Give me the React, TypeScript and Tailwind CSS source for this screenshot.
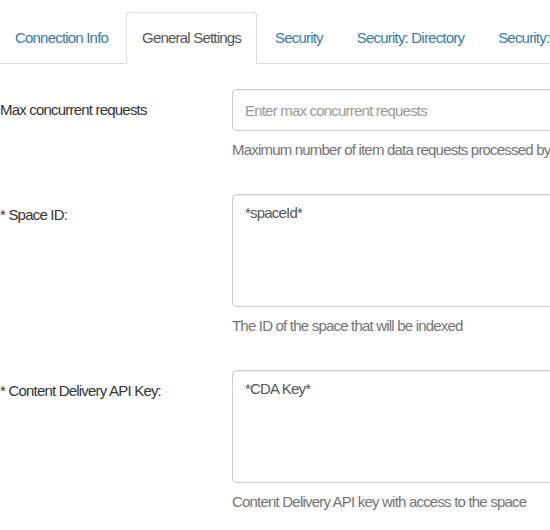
import React from 'react';

const tabs = ['Connection Info', 'General Settings', 'Security', 'Security: Directory', 'Security: Azure AD'];

const fields = [
  {
    label: 'Max concurrent requests',
    required: false,
    multiline: false,
    value: '',
    placeholder: 'Enter max concurrent requests',
    help: 'Maximum number of item data requests processed by the connector at once',
  },
  {
    label: 'Space ID:',
    required: true,
    multiline: true,
    value: '*spaceId*',
    placeholder: '',
    help: 'The ID of the space that will be indexed',
  },
  {
    label: 'Content Delivery API Key:',
    required: true,
    multiline: true,
    value: '*CDA Key*',
    placeholder: '',
    help: 'Content Delivery API key with access to the space',
  },
];

export default function App() {
  return (
    <div
      className="w-[550px] h-[530px] overflow-hidden bg-white text-[15px] tracking-[-0.8px] text-[#333]"
      style={{ fontFamily: '"Liberation Sans", Arial, sans-serif' }}
    >
      <div className="pt-[12px]">
        <ul className="flex border-b border-[#ddd] ml-[-1px] whitespace-nowrap">
          {tabs.map((t, i) => {
            const active = i === 1;
            return (
              <li key={t} className="mr-[2px] mb-[-1px] shrink-0">
                <a
                  className={
                    active
                      ? 'block px-[15px] py-[14px] leading-[22px] border border-[#ddd] border-b-transparent rounded-t-[4px] bg-white text-[#555]'
                      : 'block px-[15px] py-[14px] leading-[22px] border border-transparent text-[#337ab7]'
                  }
                >
                  {t}
                </a>
              </li>
            );
          })}
        </ul>
      </div>

      <form className="pt-[25px]">
        {fields.map((f, i) => (
          <div key={f.label} className={i < fields.length - 1 ? 'flex mb-[33px]' : 'flex'}>
            <label className="w-[232px] shrink-0 pt-[9px] leading-[23px]">
              {f.required && <span>* </span>}
              {f.label}
            </label>
            <div className="w-[360px] shrink-0">
              {f.multiline ? (
                <textarea
                  readOnly
                  value={f.value}
                  className="block w-full h-[113px] px-[12px] py-[6px] leading-[23px] border border-[#ccc] rounded-[4px] text-[#555] resize-none shadow-[inset_0_1px_1px_rgba(0,0,0,0.075)] outline-none"
                />
              ) : (
                <input
                  readOnly
                  placeholder={f.placeholder}
                  className="block w-full h-[42px] px-[12px] leading-[23px] border border-[#ccc] rounded-[4px] text-[#555] placeholder:text-[#999] shadow-[inset_0_1px_1px_rgba(0,0,0,0.075)] outline-none"
                />
              )}
              <p className="mt-[7px] leading-[23px] text-[#737373] whitespace-nowrap">{f.help}</p>
            </div>
          </div>
        ))}
      </form>
    </div>
  );
}
